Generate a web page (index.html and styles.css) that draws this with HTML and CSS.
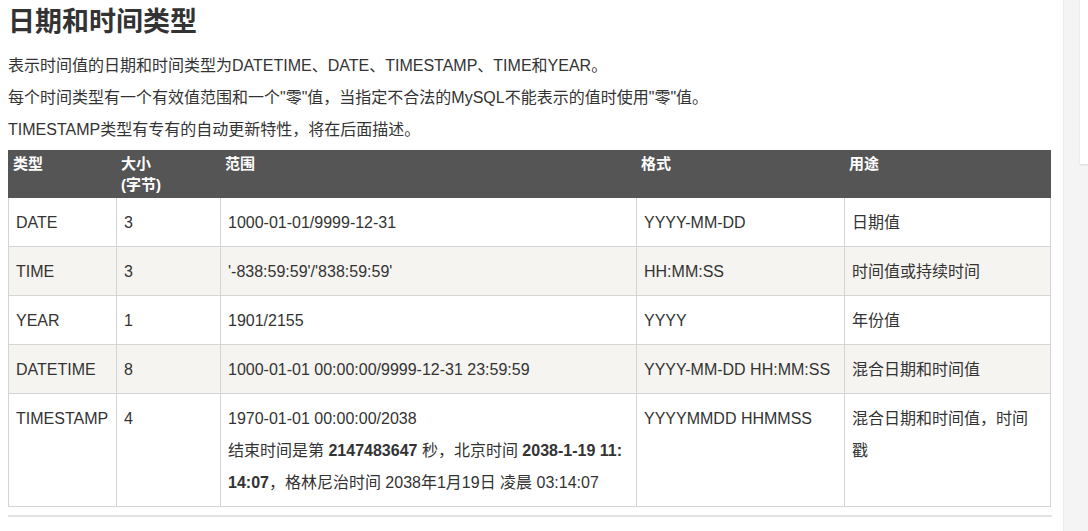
FILE: index.html
```html
<!DOCTYPE html>
<html lang="zh-CN">
<head>
<meta charset="utf-8">
<title>日期和时间类型</title>
<link rel="stylesheet" href="styles.css">
</head>
<body>
<div class="page">
  <main class="main">
    <h1 class="title">日期和时间类型</h1>
    <p class="para">表示时间值的日期和时间类型为DATETIME、DATE、TIMESTAMP、TIME和YEAR。</p>
    <p class="para">每个时间类型有一个有效值范围和一个"零"值，当指定不合法的MySQL不能表示的值时使用"零"值。</p>
    <p class="para">TIMESTAMP类型有专有的自动更新特性，将在后面描述。</p>
    <table class="ref">
      <colgroup>
        <col class="c1"><col class="c2"><col class="c3"><col class="c4"><col class="c5">
      </colgroup>
      <thead>
        <tr>
          <th>类型</th>
          <th>大小<br>(字节)</th>
          <th>范围</th>
          <th>格式</th>
          <th>用途</th>
        </tr>
      </thead>
      <tbody>
        <tr>
          <td>DATE</td><td>3</td><td>1000-01-01/9999-12-31</td><td>YYYY-MM-DD</td><td>日期值</td>
        </tr>
        <tr class="alt">
          <td>TIME</td><td>3</td><td>'-838:59:59'/'838:59:59'</td><td>HH:MM:SS</td><td>时间值或持续时间</td>
        </tr>
        <tr>
          <td>YEAR</td><td>1</td><td>1901/2155</td><td>YYYY</td><td>年份值</td>
        </tr>
        <tr class="alt">
          <td>DATETIME</td><td>8</td><td>1000-01-01 00:00:00/9999-12-31 23:59:59</td><td>YYYY-MM-DD HH:MM:SS</td><td>混合日期和时间值</td>
        </tr>
        <tr>
          <td>TIMESTAMP</td><td>4</td>
          <td>1970-01-01 00:00:00/2038<br>结束时间是第 <strong>2147483647</strong> 秒，北京时间 <strong>2038-1-19 11:<br>14:07</strong>，格林尼治时间 2038年1月19日 凌晨 03:14:07</td>
          <td>YYYYMMDD HHMMSS</td><td>混合日期和时间值，时间戳</td>
        </tr>
      </tbody>
    </table>
    <hr class="rule">
  </main>
  <aside class="side">
    <div class="card"></div>
  </aside>
</div>
</body>
</html>
```

FILE: styles.css
```css
html, body {
  margin: 0;
  padding: 0;
  background: #ffffff;
}

body {
  font-family: "Liberation Sans", "Noto Sans CJK SC", sans-serif;
  color: #333333;
  font-size: 16px;
}

.page {
  display: flex;
  align-items: stretch;
  min-height: 531px;
}

.main {
  width: 1064px;
  box-sizing: border-box;
  padding: 4px 13px 0 8px;
  border-right: 1px solid #ececec;
  background: #ffffff;
}

.side {
  flex: 1;
  background: #f4f4f4;
  padding-left: 16px;
}

.card {
  height: 164px;
  background: #ffffff;
  box-shadow: 0 1px 2px rgba(0, 0, 0, 0.12);
}

.title {
  margin: 0 0 10px 0;
  font-size: 27px;
  line-height: 36px;
  font-weight: bold;
  color: #333333;
}

.para {
  margin: 0;
  line-height: 32px;
}

.ref {
  margin-top: 4px;
  width: 1042px;
  border-collapse: collapse;
  table-layout: fixed;
}

.c1 { width: 108px; }
.c2 { width: 104px; }
.c3 { width: 416px; }
.c4 { width: 208px; }
.c5 { width: 206px; }

.ref th {
  background: #555555;
  color: #ffffff;
  border: 1px solid #555555;
  text-align: left;
  vertical-align: top;
  font-size: 15px;
  line-height: 21px;
  font-weight: bold;
  padding: 2px 4px 2px 4px;
}

.ref td {
  border: 1px solid #d4d4d4;
  vertical-align: top;
  line-height: 32px;
  padding: 9px 7px 7px 7px;
}

.ref tr.alt td {
  background: #f6f4f0;
}

.rule {
  margin: 8px 0 0 0;
  width: 1044px;
  border: 0;
  border-top: 2px solid #e2e2e2;
  height: 0;
}
```
